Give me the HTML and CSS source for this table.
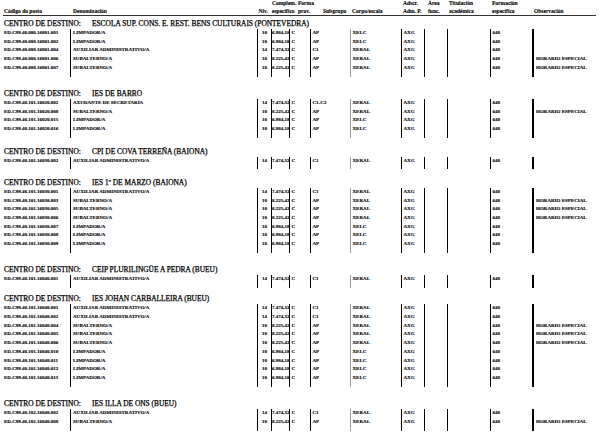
FILE: index.html
```html
<!DOCTYPE html>
<html lang="gl">
<head>
<meta charset="utf-8">
<title>Relación de postos</title>
<link rel="stylesheet" href="styles.css">
</head>
<body>
<div class="page">
  <div class="thead">
    <div class="th"><span></span><span>Código do posto</span></div>
    <div class="th"><span></span><span>Denominación</span></div>
    <div class="th"><span></span><span>Niv.</span></div>
    <div class="th"><span>Complem.</span><span>específico</span></div>
    <div class="th"><span>Forma</span><span>prov.</span></div>
    <div class="th"><span></span><span>Subgrupo</span></div>
    <div class="th"><span></span><span>Corpo/escala</span></div>
    <div class="th"><span>Adscr.</span><span>Adm. P.</span></div>
    <div class="th"><span>Área</span><span>func.</span></div>
    <div class="th"><span>Titulación</span><span>académica</span></div>
    <div class="th"><span>Formación</span><span>específica</span></div>
    <div class="th"><span></span><span>Observación</span></div>
  </div>
  <div class="rule"></div>

  <section class="sec first">
    <h2 class="centro"><span class="lbl">CENTRO DE DESTINO:</span>ESCOLA SUP. CONS. E. REST. BENS CULTURAIS (PONTEVEDRA)</h2>
    <div class="rows">
      <div class="row"><span>ED.C99.40.000.16001.001</span><span>LIMPADOR/A</span><span>10</span><span>6.984,18</span><span>C</span><span>AP</span><span>XELC</span><span>AXG</span><span></span><span></span><span>648</span><span></span></div>
      <div class="row"><span>ED.C99.40.000.16001.002</span><span>LIMPADOR/A</span><span>10</span><span>6.984,18</span><span>C</span><span>AP</span><span>XELC</span><span>AXG</span><span></span><span></span><span>648</span><span></span></div>
      <div class="row"><span>ED.C99.40.000.16001.004</span><span>AUXILIAR ADMINISTRATIVO/A</span><span>14</span><span>7.474,32</span><span>C</span><span>C1</span><span>XERAL</span><span>AXG</span><span></span><span></span><span>648</span><span></span></div>
      <div class="row"><span>ED.C99.40.000.16001.006</span><span>SUBALTERNO/A</span><span>10</span><span>8.225,42</span><span>C</span><span>AP</span><span>XERAL</span><span>AXG</span><span></span><span></span><span>648</span><span>HORARIO ESPECIAL</span></div>
      <div class="row"><span>ED.C99.40.000.16001.007</span><span>SUBALTERNO/A</span><span>10</span><span>8.225,42</span><span>C</span><span>AP</span><span>XERAL</span><span>AXG</span><span></span><span></span><span>648</span><span>HORARIO ESPECIAL</span></div>
    </div>
  </section>

  <section class="sec wide">
    <h2 class="centro"><span class="lbl">CENTRO DE DESTINO:</span>IES DE BARRO</h2>
    <div class="rows">
      <div class="row"><span>ED.C99.40.101.16020.002</span><span>AXUDANTE DE SECRETARÍA</span><span>14</span><span>7.474,32</span><span>C</span><span>C1-C2</span><span>XERAL</span><span>AXG</span><span></span><span></span><span>648</span><span></span></div>
      <div class="row"><span>ED.C99.40.101.16020.008</span><span>SUBALTERNO/A</span><span>10</span><span>8.225,42</span><span>C</span><span>AP</span><span>XERAL</span><span>AXG</span><span></span><span></span><span>648</span><span>HORARIO ESPECIAL</span></div>
      <div class="row"><span>ED.C99.40.101.16020.015</span><span>LIMPADOR/A</span><span>10</span><span>6.984,18</span><span>C</span><span>AP</span><span>XELC</span><span>AXG</span><span></span><span></span><span>648</span><span></span></div>
      <div class="row"><span>ED.C99.40.101.16020.016</span><span>LIMPADOR/A</span><span>10</span><span>6.984,18</span><span>C</span><span>AP</span><span>XELC</span><span>AXG</span><span></span><span></span><span>648</span><span></span></div>
    </div>
  </section>

  <section class="sec">
    <h2 class="centro"><span class="lbl">CENTRO DE DESTINO:</span>CPI DE COVA TERREÑA (BAIONA)</h2>
    <div class="rows">
      <div class="row"><span>ED.C99.40.101.16030.002</span><span>AUXILIAR ADMINISTRATIVO/A</span><span>14</span><span>7.474,32</span><span>C</span><span>C1</span><span>XERAL</span><span>AXG</span><span></span><span></span><span>648</span><span></span></div>
    </div>
  </section>

  <section class="sec">
    <h2 class="centro"><span class="lbl">CENTRO DE DESTINO:</span>IES 1º DE MARZO (BAIONA)</h2>
    <div class="rows">
      <div class="row"><span>ED.C99.40.101.16030.001</span><span>AUXILIAR ADMINISTRATIVO/A</span><span>14</span><span>7.474,32</span><span>C</span><span>C1</span><span>XERAL</span><span>AXG</span><span></span><span></span><span>648</span><span></span></div>
      <div class="row"><span>ED.C99.40.101.16030.003</span><span>SUBALTERNO/A</span><span>10</span><span>8.225,42</span><span>C</span><span>AP</span><span>XERAL</span><span>AXG</span><span></span><span></span><span>648</span><span>HORARIO ESPECIAL</span></div>
      <div class="row"><span>ED.C99.40.101.16030.005</span><span>SUBALTERNO/A</span><span>10</span><span>8.225,42</span><span>C</span><span>AP</span><span>XERAL</span><span>AXG</span><span></span><span></span><span>648</span><span>HORARIO ESPECIAL</span></div>
      <div class="row"><span>ED.C99.40.101.16030.006</span><span>SUBALTERNO/A</span><span>10</span><span>8.225,42</span><span>C</span><span>AP</span><span>XERAL</span><span>AXG</span><span></span><span></span><span>648</span><span>HORARIO ESPECIAL</span></div>
      <div class="row"><span>ED.C99.40.101.16030.007</span><span>LIMPADOR/A</span><span>10</span><span>6.984,18</span><span>C</span><span>AP</span><span>XELC</span><span>AXG</span><span></span><span></span><span>648</span><span></span></div>
      <div class="row"><span>ED.C99.40.101.16030.008</span><span>LIMPADOR/A</span><span>10</span><span>6.984,18</span><span>C</span><span>AP</span><span>XELC</span><span>AXG</span><span></span><span></span><span>648</span><span></span></div>
      <div class="row"><span>ED.C99.40.101.16030.009</span><span>LIMPADOR/A</span><span>10</span><span>6.984,18</span><span>C</span><span>AP</span><span>XELC</span><span>AXG</span><span></span><span></span><span>648</span><span></span></div>
    </div>
  </section>

  <section class="sec wide">
    <h2 class="centro"><span class="lbl">CENTRO DE DESTINO:</span>CEIP PLURILINGÜE A PEDRA (BUEU)</h2>
    <div class="rows">
      <div class="row"><span>ED.C99.40.101.16040.001</span><span>AUXILIAR ADMINISTRATIVO/A</span><span>14</span><span>7.474,32</span><span>C</span><span>C1</span><span>XERAL</span><span>AXG</span><span></span><span></span><span>648</span><span></span></div>
    </div>
  </section>

  <section class="sec narrow">
    <h2 class="centro"><span class="lbl">CENTRO DE DESTINO:</span>IES JOHAN CARBALLEIRA (BUEU)</h2>
    <div class="rows">
      <div class="row"><span>ED.C99.40.101.16040.001</span><span>AUXILIAR ADMINISTRATIVO/A</span><span>14</span><span>7.474,32</span><span>C</span><span>C1</span><span>XERAL</span><span>AXG</span><span></span><span></span><span>648</span><span></span></div>
      <div class="row"><span>ED.C99.40.101.16040.002</span><span>AUXILIAR ADMINISTRATIVO/A</span><span>14</span><span>7.474,32</span><span>C</span><span>C1</span><span>XERAL</span><span>AXG</span><span></span><span></span><span>648</span><span></span></div>
      <div class="row"><span>ED.C99.40.101.16040.004</span><span>SUBALTERNO/A</span><span>10</span><span>8.225,42</span><span>C</span><span>AP</span><span>XERAL</span><span>AXG</span><span></span><span></span><span>648</span><span>HORARIO ESPECIAL</span></div>
      <div class="row"><span>ED.C99.40.101.16040.005</span><span>SUBALTERNO/A</span><span>10</span><span>8.225,42</span><span>C</span><span>AP</span><span>XERAL</span><span>AXG</span><span></span><span></span><span>648</span><span>HORARIO ESPECIAL</span></div>
      <div class="row"><span>ED.C99.40.101.16040.006</span><span>SUBALTERNO/A</span><span>10</span><span>8.225,42</span><span>C</span><span>AP</span><span>XERAL</span><span>AXG</span><span></span><span></span><span>648</span><span>HORARIO ESPECIAL</span></div>
      <div class="row"><span>ED.C99.40.101.16040.010</span><span>LIMPADOR/A</span><span>10</span><span>6.984,18</span><span>C</span><span>AP</span><span>XELC</span><span>AXG</span><span></span><span></span><span>648</span><span></span></div>
      <div class="row"><span>ED.C99.40.101.16040.011</span><span>LIMPADOR/A</span><span>10</span><span>6.984,18</span><span>C</span><span>AP</span><span>XELC</span><span>AXG</span><span></span><span></span><span>648</span><span></span></div>
      <div class="row"><span>ED.C99.40.101.16040.012</span><span>LIMPADOR/A</span><span>10</span><span>6.984,18</span><span>C</span><span>AP</span><span>XELC</span><span>AXG</span><span></span><span></span><span>648</span><span></span></div>
      <div class="row"><span>ED.C99.40.101.16040.013</span><span>LIMPADOR/A</span><span>10</span><span>6.984,18</span><span>C</span><span>AP</span><span>XELC</span><span>AXG</span><span></span><span></span><span>648</span><span></span></div>
    </div>
  </section>

  <section class="sec wide">
    <h2 class="centro"><span class="lbl">CENTRO DE DESTINO:</span>IES ILLA DE ONS (BUEU)</h2>
    <div class="rows">
      <div class="row"><span>ED.C99.40.102.16040.002</span><span>AUXILIAR ADMINISTRATIVO/A</span><span>14</span><span>7.474,32</span><span>C</span><span>C1</span><span>XERAL</span><span>AXG</span><span></span><span></span><span>648</span><span></span></div>
      <div class="row"><span>ED.C99.40.102.16040.008</span><span>SUBALTERNO/A</span><span>10</span><span>8.225,42</span><span>C</span><span>AP</span><span>XERAL</span><span>AXG</span><span></span><span></span><span>648</span><span>HORARIO ESPECIAL</span></div>
    </div>
  </section>
</div>
</body>
</html>
```

FILE: styles.css
```css
html, body {
  margin: 0;
  padding: 0;
  background: #ffffff;
  color: #000000;
  font-family: "Liberation Serif", "Times New Roman", serif;
}

.page {
  width: 616px;
  overflow: hidden;
}

/* shared column template */
.thead,
.row {
  display: grid;
  grid-template-columns: 70px 187px 14px 18px 21px 40px 51px 23px 23px 43px 42px 1fr;
}

/* header */
.th {
  display: flex;
  flex-direction: column;
  font-size: 5.5px;
  font-weight: bold;
  line-height: 7.5px;
  white-space: nowrap;
  -webkit-text-stroke: 0.1px #000000;
}
.th span {
  display: block;
  height: 7.5px;
}
.th:nth-child(1) { padding-left: 4px; }
.th:nth-child(2) { padding-left: 3px; }
.th:nth-child(3) { padding-left: 1.5px; }
.th:nth-child(4) { padding-left: 1px; }
.th:nth-child(5) { padding-left: 9px; }
.th:nth-child(6) { padding-left: 13px; }
.th:nth-child(7) { padding-left: 2px; }
.th:nth-child(8) { padding-left: 2px; }
.th:nth-child(9) { padding-left: 4px; }
.th:nth-child(10) { padding-left: 2px; }
.th:nth-child(11) { padding-left: 2px; }
.th:nth-child(12) { padding-left: 2px; }

.rule {
  height: 1px;
  background: #333333;
  margin: 0 20px 0 3px;
}

/* sections */
.sec { margin-top: 8.7px; }
.sec.first { margin-top: 3px; }
.sec.wide { margin-top: 12.5px; }
.sec.narrow { margin-top: 6.3px; }

.centro {
  margin: 0;
  padding-left: 4px;
  font-size: 7.4px;
  font-weight: normal;
  line-height: 10px;
  height: 10px;
  white-space: nowrap;
  color: #000000;
  -webkit-text-stroke: 0.25px #000000;
}
.centro .lbl {
  display: inline-block;
  width: 88px;
}

/* data rows */
.row > span {
  font-size: 5px;
  font-weight: bold;
  line-height: 8.7px;
  white-space: nowrap;
  overflow: hidden;
  -webkit-text-stroke: 0.12px #000000;
}
.row > span:nth-child(n+2) { border-left: 1px solid #000000; }
.row > span:nth-child(1) { padding-left: 4px; }
.row > span:nth-child(2) { padding-left: 2px; }
.row > span:nth-child(3) { text-align: center; }
.row > span:nth-child(4) { text-align: right; padding-right: 1px; }
.row > span:nth-child(5) { padding-left: 1.5px; }
.row > span:nth-child(6) { padding-left: 1.5px; }
.row > span:nth-child(7) { padding-left: 1.5px; border-left: 1.5px solid #9a9a9a; }
.row > span:nth-child(8) { padding-left: 1.5px; }
.row > span:nth-child(11) { padding-left: 1.5px; }
.row > span:nth-child(12) { padding-left: 2px; border-left: 2px solid #000000; }

.rows .row:last-child > span { padding-bottom: 4px; }
```
